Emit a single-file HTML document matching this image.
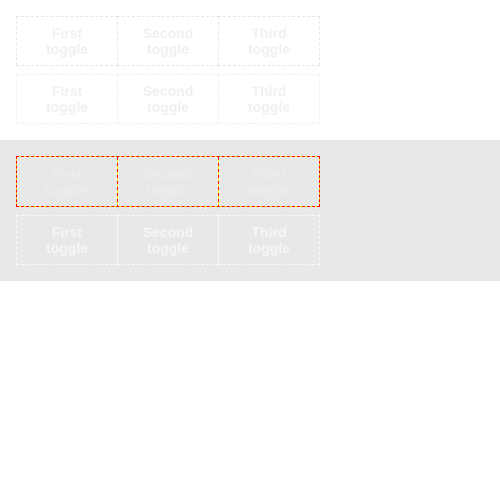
<!DOCTYPE html>
<html><head><style>
body{margin:0;width:500px;height:500px;background:#fff;font-family:"Liberation Sans","DejaVu Sans",sans-serif;position:relative;overflow:hidden}
.row{position:absolute;left:16px;display:flex;height:50px}
.c{width:102px;height:50px;box-sizing:border-box;margin-right:-1px;border:1px dashed #e6e6e6;display:flex;align-items:center;justify-content:center;text-align:center;font-weight:bold;font-size:14px;line-height:16px;color:#f0f0f0}
.r2 .c{border-color:#f0f0f0}
.band{position:absolute;left:0;top:140px;width:500px;height:141px;background:#e8e8e8}
.box{position:absolute;left:16px;top:156px;width:304px;height:51px;box-sizing:border-box;border:1px dashed red;background:linear-gradient(#e8e8e8,#e8e8e8) padding-box,#ff0 border-box}
.sep{position:absolute;top:157px;width:1px;height:49px;background:repeating-linear-gradient(to bottom,red 0 3px,#ff0 3px 6px)}
.t3{position:absolute;top:156px;width:101px;height:51px;display:flex;align-items:center;justify-content:center;text-align:center;font-weight:bold;font-size:14px;line-height:16px;color:#ececec}
.r4 .c{border-color:#fafafa;color:#f6f6f6}
.r4 .c+.c{border-left-style:solid}
</style></head><body>
<div class="row" style="top:16px"><div class="c">First<br>toggle</div><div class="c">Second<br>toggle</div><div class="c">Third<br>toggle</div></div>
<div class="row r2" style="top:74px"><div class="c">First<br>toggle</div><div class="c">Second<br>toggle</div><div class="c">Third<br>toggle</div></div>
<div class="band"></div>
<div class="box"></div>
<div class="sep" style="left:117px"></div>
<div class="sep" style="left:218px"></div>
<div class="t3" style="left:16px">First<br>toggle</div>
<div class="t3" style="left:117px">Second<br>toggle</div>
<div class="t3" style="left:218px">Third<br>toggle</div>
<div class="row r4" style="top:215px"><div class="c">First<br>toggle</div><div class="c">Second<br>toggle</div><div class="c">Third<br>toggle</div></div>
</body></html>
